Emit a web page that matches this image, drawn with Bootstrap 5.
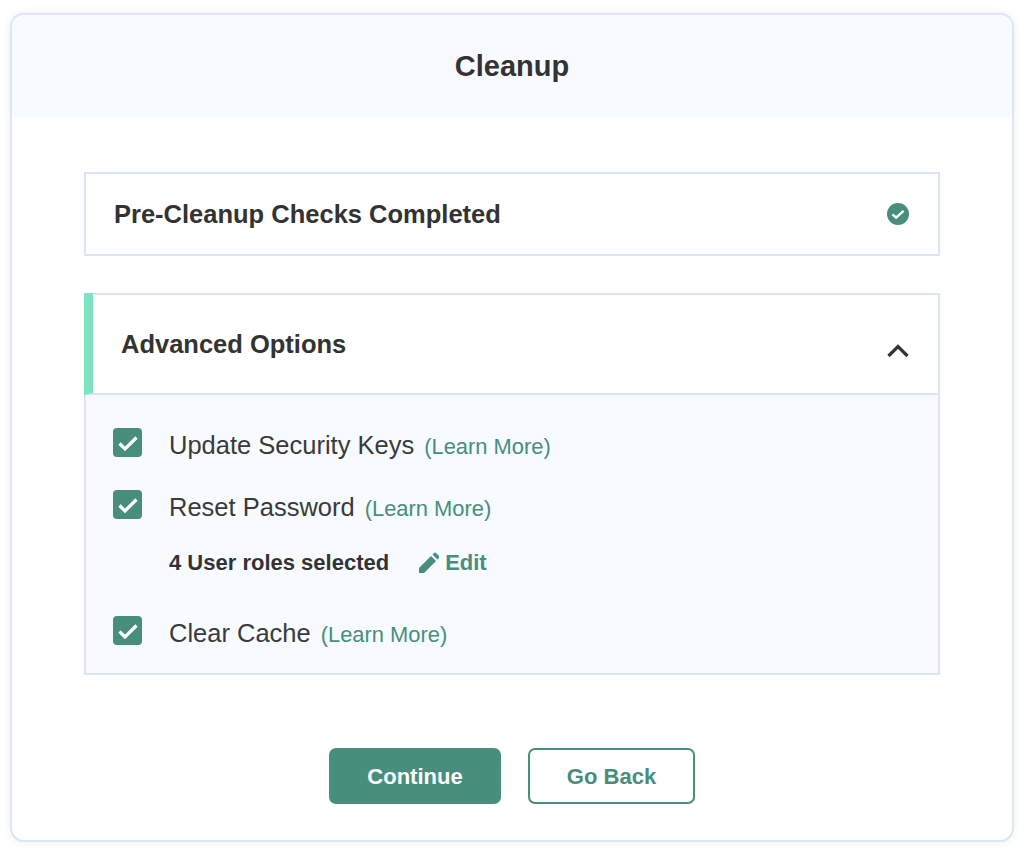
<!DOCTYPE html>
<html lang="en"><head><meta charset="utf-8">
<link href="https://cdn.jsdelivr.net/npm/bootstrap@5.3.0/dist/css/bootstrap.min.css" rel="stylesheet">
<style>
html,body{height:850px;overflow:hidden;background:#fff;}
body{font-family:"Liberation Sans",Arial,sans-serif;color:#333;padding:13px 10px 8px;}
.shell{height:829px;border:2px solid #dbe5f8;border-radius:14px;overflow:hidden;box-shadow:0 0 10px rgba(0,0,0,.07);background:#fff;}
.shell-head{height:102px;background:#f7faff;font-size:29px;font-weight:700;line-height:1;}
.shell-body{padding:55px 72px 0 72px;}
.panel-a{height:84px;border:2px solid #dbe5f8;padding:0 29px 0 28px;margin-bottom:37px;font-size:25.5px;font-weight:700;}
.panel-b{border:2px solid #dbe5f8;height:382px;}
.panel-b-head{height:102px;border-left:9px solid #7ee3c3;border-bottom:2px solid #dbe5f8;margin:-2px 0 0 -2px;padding:0 28px;font-size:25.5px;font-weight:700;}
.panel-b-head svg{margin-top:14px;}
.panel-b-title{margin-top:2px;}
.panel-b-body{background:#f7faff;height:278px;padding:32px 27px 0;}
.opt{height:62px;font-size:25.5px;color:#3a3a3a;gap:27px;align-items:flex-start;line-height:36px;}
.tick{width:29px;height:29px;background:#488e7c;border-radius:4px;flex:none;margin-top:1px;}
.lm{font-size:21.9px;color:#488e7c;margin-left:10px;}
.roles{font-size:22px;font-weight:700;margin:-6px 0 0 56px;height:70px;gap:30px;line-height:36px;}
.edit{color:#488e7c;gap:6px;}
.foot{margin-top:73px;gap:27px;}
.btn-fill,.btn-line{height:56px;border-radius:7px;font-size:22px;font-weight:700;}
.btn-fill{width:172px;background:#488e7c;color:#fff;border:0;}
.btn-line{width:167px;background:#fff;color:#488e7c;border:2px solid #488e7c;}
</style></head><body>
<div class="shell">
<div class="shell-head d-flex align-items-center justify-content-center">Cleanup</div>
<div class="shell-body">
<div class="panel-a d-flex align-items-center justify-content-between"><span>Pre-Cleanup Checks Completed</span>
<svg width="22" height="22" viewBox="0 0 22 22" aria-hidden="true"><circle cx="11" cy="11" r="11" fill="#488e7c"/><path d="M5.5 11.3l3.6 3.4L16.6 7.8" fill="none" stroke="#fff" stroke-width="2.4"/></svg></div>
<div class="panel-b">
<div class="panel-b-head d-flex align-items-center justify-content-between"><span class="panel-b-title">Advanced Options</span>
<svg width="24" height="16" viewBox="0 0 24 16" aria-hidden="true"><path d="M2.5 14L12 4.5l9.5 9.5" fill="none" stroke="#333" stroke-width="3.2"/></svg></div>
<div class="panel-b-body">
<div class="opt d-flex"><span class="tick d-flex align-items-center justify-content-center"><svg width="20" height="16" viewBox="0 0 20 16" aria-hidden="true"><path d="M1.5 8.5l5.5 5.5L18.5 2.5" fill="none" stroke="#fff" stroke-width="3.2"/></svg></span><span>Update Security Keys<span class="lm">(Learn More)</span></span></div>
<div class="opt d-flex"><span class="tick d-flex align-items-center justify-content-center"><svg width="20" height="16" viewBox="0 0 20 16" aria-hidden="true"><path d="M1.5 8.5l5.5 5.5L18.5 2.5" fill="none" stroke="#fff" stroke-width="3.2"/></svg></span><span>Reset Password<span class="lm">(Learn More)</span></span></div>
<div class="roles d-flex"><span>4 User roles selected</span><span class="edit d-flex"><svg width="20" height="36" viewBox="0 0 20 36" aria-hidden="true"><path d="M0 28v-5L12 11l5 5L5 28zM13.5 9.5l1.5-1.5a1.4 1.4 0 0 1 2 0l3 3a1.4 1.4 0 0 1 0 2l-1.5 1.5z" fill="#488e7c"/></svg>Edit</span></div>
<div class="opt d-flex"><span class="tick d-flex align-items-center justify-content-center"><svg width="20" height="16" viewBox="0 0 20 16" aria-hidden="true"><path d="M1.5 8.5l5.5 5.5L18.5 2.5" fill="none" stroke="#fff" stroke-width="3.2"/></svg></span><span>Clear Cache<span class="lm">(Learn More)</span></span></div>
</div></div>
<div class="foot d-flex justify-content-center">
<button class="btn btn-fill">Continue</button><button class="btn btn-line">Go Back</button>
</div>
</div></div>
<script src="https://cdn.jsdelivr.net/npm/bootstrap@5.3.0/dist/js/bootstrap.bundle.min.js"></script>
</body></html>
